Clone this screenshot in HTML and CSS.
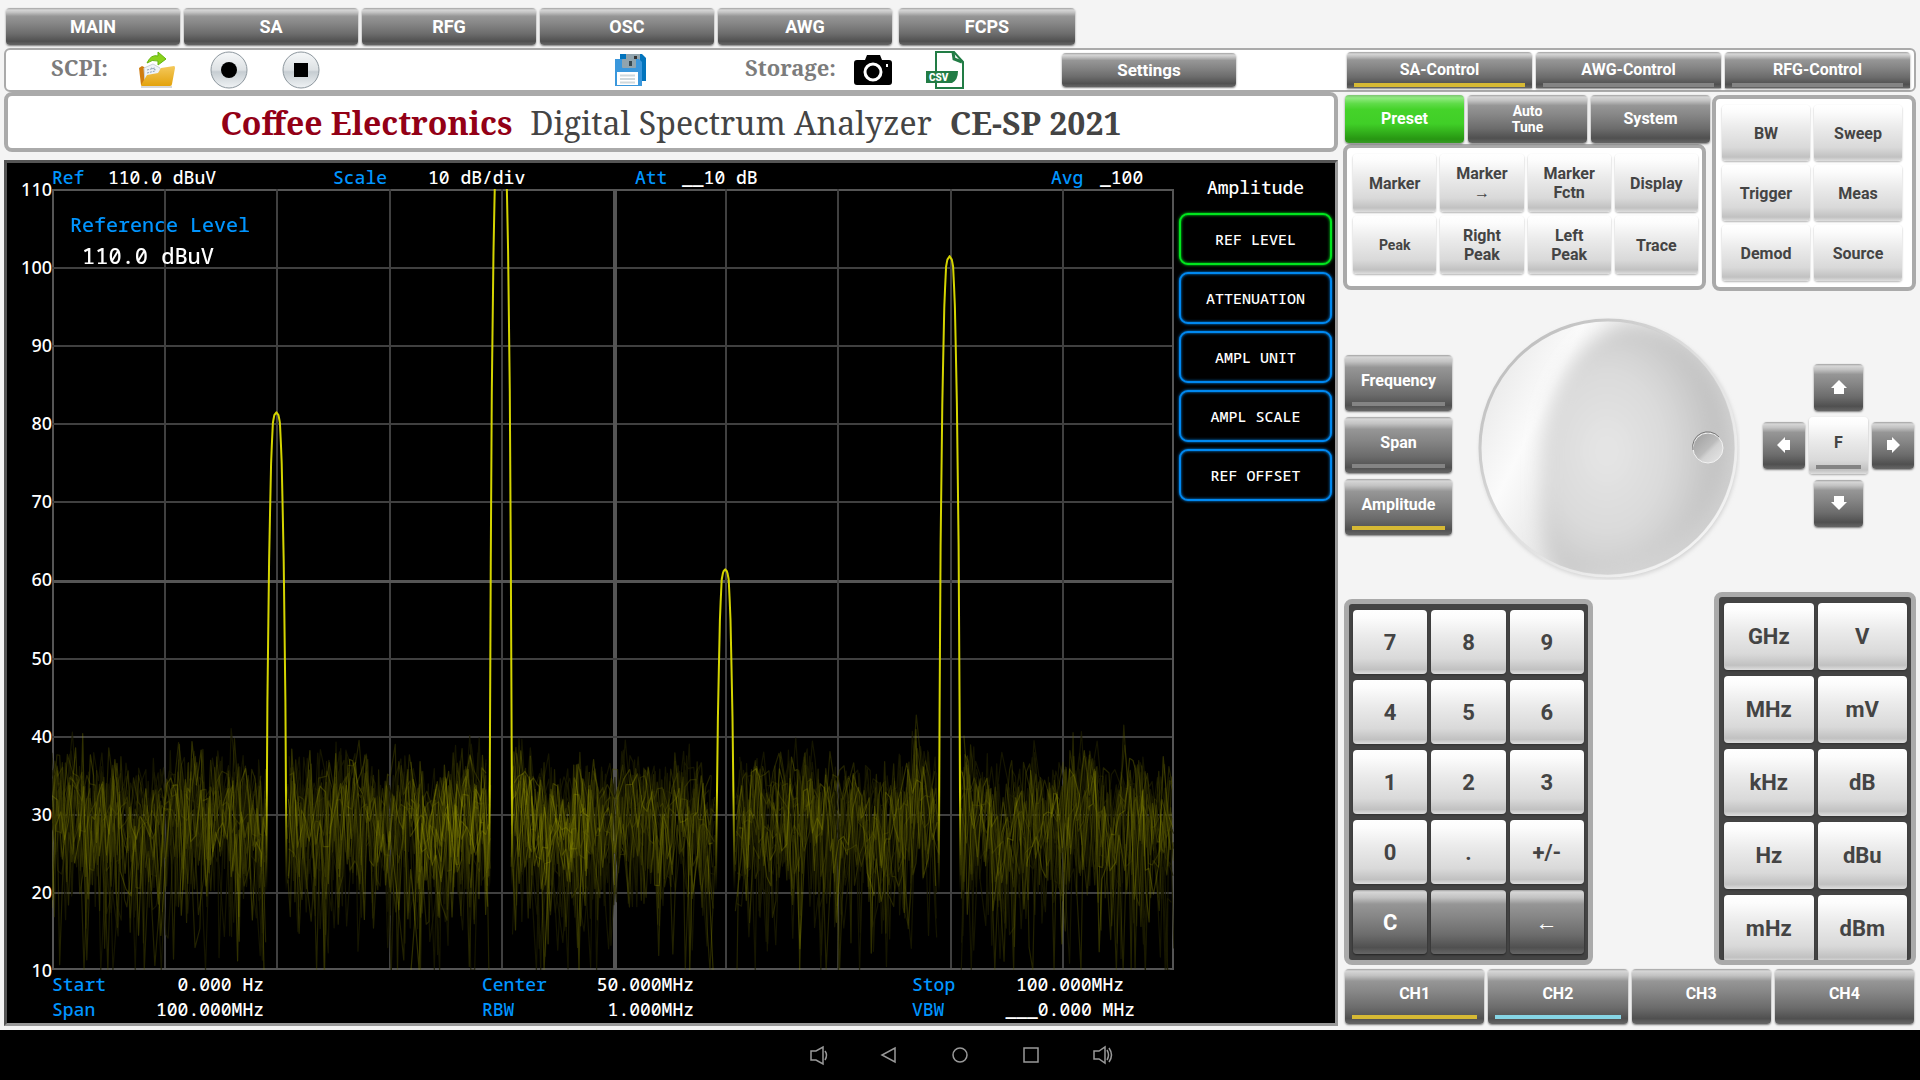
FILE: index.html
```
<!DOCTYPE html>
<html lang="en">
<head>
    <meta charset="UTF-8">
    <meta name="viewport" content="width=device-width, initial-scale=1.0">
    <title>Digital Spectrum Analyzer CE-SP 2021</title>
    <link rel="stylesheet" href="styles.css">
</head>
<body>
    <!-- Instrument mode buttons -->
    <nav class="modes">
        <button class="btn">MAIN</button>
        <button class="btn">SA</button>
        <button class="btn">RFG</button>
        <button class="btn">OSC</button>
        <button class="btn">AWG</button>
        <button class="btn">FCPS</button>
    </nav>

    <!-- Toolbar -->
    <header class="toolbar">
        <div class="tool-group">
            <span class="tool-label">SCPI:</span>
            <button class="icon-btn" aria-label="Open script">
                <svg width="38" height="38" viewBox="0 0 38 38">
                    <defs>
                        <linearGradient id="folder" x1="0" y1="0" x2="0" y2="1">
                            <stop offset="0" stop-color="#f4c95c"/>
                            <stop offset="1" stop-color="#e3a20c"/>
                        </linearGradient>
                    </defs>
                    <path d="M3 36h31" stroke="#d8d8d8" stroke-width="2"/>
                    <path d="M1 17l3-2 4 2v17H3z" fill="#d07c10"/>
                    <path d="M6 17l9-4 7 4 2 10-17 4z" fill="#eef2f6" stroke="#ccd3da" stroke-width="1"/>
                    <path d="M9 19l8-2M9 22l8-2M13 17l5 2" stroke="#8ea2b8" stroke-width="1" stroke-dasharray="2 1"/>
                    <path d="M9 24l11-2 3-5 13-2q1 0 1 2l-3 16q0 2-2 2H4q-1 0-1-1z" fill="url(#folder)"/>
                    <path d="M9 12Q13 3 20 5V1l8 7-8 6v-4q-6-2-11 2z" fill="#8bd21c" stroke="#63b40c" stroke-width="1"/>
                </svg>
            </button>
            <button class="icon-btn" aria-label="Record">
                <svg width="38" height="38" viewBox="0 0 38 38">
                    <defs>
                        <linearGradient id="disc" x1="0" y1="0" x2="0" y2="1">
                            <stop offset="0" stop-color="#f6f8f9"/>
                            <stop offset="0.5" stop-color="#dde1e4"/>
                            <stop offset="0.55" stop-color="#c6cdd2"/>
                            <stop offset="1" stop-color="#f0f3f5"/>
                        </linearGradient>
                    </defs>
                    <circle cx="19" cy="19" r="18" fill="url(#disc)" stroke="#8d979e" stroke-width="1"/>
                    <circle cx="19" cy="19" r="8" fill="#000"/>
                </svg>
            </button>
            <button class="icon-btn" aria-label="Stop">
                <svg width="38" height="38" viewBox="0 0 38 38">
                    <circle cx="19" cy="19" r="18" fill="url(#disc)" stroke="#8d979e" stroke-width="1"/>
                    <rect x="12" y="12" width="14" height="14" fill="#000"/>
                </svg>
            </button>
        </div>
        <div class="tool-group">
            <button class="icon-btn" aria-label="Save">
                <svg width="38" height="38" viewBox="0 0 38 38">
                    <path d="M9 3h22l4 4v23H9z" fill="#0274bd"/>
                    <path d="M15 3h14v6H15z" fill="#90a4ae"/>
                    <path d="M23 5h3v3h-3z" fill="#333"/>
                    <path d="M4 8h24l3 3v24H4z" fill="#3a97dc"/>
                    <rect x="11" y="8" width="14" height="9" rx="1" fill="#90a4ae"/>
                    <rect x="18" y="10" width="3" height="5" fill="#37474f"/>
                    <rect x="6" y="21" width="21" height="13" fill="#fff"/>
                    <path d="M9 24.500h15M9 28h15M9 31.500h15" stroke="#cfd8dc" stroke-width="2"/>
                </svg>
            </button>
        </div>
        <div class="tool-group storage">
            <span class="tool-label">Storage:</span>
            <button class="icon-btn" aria-label="Screenshot">
                <svg width="38" height="38" viewBox="0 0 38 38">
                    <path d="M3 9h8l2-5h13l2 5h7q3 0 3 3v19q0 3-3 3H3q-3 0-3-3V12q0-3 3-3z" fill="#000"/>
                    <circle cx="19" cy="21" r="8" fill="none" stroke="#fff" stroke-width="3"/>
                    <rect x="32" y="13" width="2" height="3" fill="#fff"/>
                </svg>
            </button>
            <button class="icon-btn" aria-label="Export CSV">
                <svg width="38" height="38" viewBox="0 0 38 38">
                    <path d="M10 1h18l9 10v26H10z" fill="#fff" stroke="#227c45" stroke-width="2"/>
                    <path d="M27 1l1 7 8 3" fill="none" stroke="#227c45" stroke-width="3"/>
                    <path d="M0 20h32q0 9-6 12H0z" fill="#227c45"/>
                    <text x="3" y="30" class="csv-text">CSV</text>
                </svg>
            </button>
        </div>
        <button class="btn settings">Settings</button>
        <div class="tabs">
            <button class="btn led yellow">SA-Control</button>
            <button class="btn led">AWG-Control</button>
            <button class="btn led">RFG-Control</button>
        </div>
    </header>

    <main class="workspace">
        <section class="instrument">
            <h1 class="title">
                <b class="brand">Coffee Electronics</b>
                <span>Digital Spectrum Analyzer</span>
                <b>CE-SP 2021</b>
            </h1>

            <div class="screen">
                <div class="graph">
                    <dl class="readout-top">
                        <dt>Ref</dt><dd>110.0 dBuV</dd>
                        <dt>Scale</dt><dd>10 dB/div</dd>
                        <dt>Att</dt><dd>__10 dB</dd>
                        <dt>Avg</dt><dd>_100</dd>
                    </dl>
                    <div class="axis">
                        <span>110</span><span>100</span><span>90</span><span>80</span><span>70</span><span>60</span><span>50</span><span>40</span><span>30</span><span>20</span><span>10</span>
                    </div>
                    <div class="plot">
                        <canvas id="trace"></canvas>
                        <div class="ref-level">
                            <span>Reference Level</span>
                            <strong>110.0 dBuV</strong>
                        </div>
                    </div>
                    <dl class="readout-bottom">
                        <div><dt>Start</dt><dd>0.000 Hz</dd></div>
                        <div><dt>Center</dt><dd>50.000MHz</dd></div>
                        <div><dt>Stop</dt><dd>100.000MHz</dd></div>
                        <div><dt>Span</dt><dd>100.000MHz</dd></div>
                        <div><dt>RBW</dt><dd>1.000MHz</dd></div>
                        <div class="wide"><dt>VBW</dt><dd>___0.000 MHz</dd></div>
                    </dl>
                </div>
                <div class="soft-menu">
                    <h2>Amplitude</h2>
                    <button class="soft active">REF LEVEL</button>
                    <button class="soft">ATTENUATION</button>
                    <button class="soft">AMPL UNIT</button>
                    <button class="soft">AMPL SCALE</button>
                    <button class="soft">REF OFFSET</button>
                </div>
            </div>
        </section>

        <aside class="controls">
            <div class="functions">
                <div class="functions-left">
                    <div class="preset-row">
                        <button class="btn green">Preset</button>
                        <button class="btn small">Auto<br>Tune</button>
                        <button class="btn">System</button>
                    </div>
                    <div class="box marker-box">
                        <button class="btn light">Marker</button>
                        <button class="btn light">Marker<br>→</button>
                        <button class="btn light">Marker<br>Fctn</button>
                        <button class="btn light">Display</button>
                        <button class="btn light small">Peak</button>
                        <button class="btn light">Right<br>Peak</button>
                        <button class="btn light">Left<br>Peak</button>
                        <button class="btn light">Trace</button>
                    </div>
                </div>
                <div class="box measure-box">
                    <button class="btn light">BW</button>
                    <button class="btn light">Sweep</button>
                    <button class="btn light">Trigger</button>
                    <button class="btn light">Meas</button>
                    <button class="btn light">Demod</button>
                    <button class="btn light">Source</button>
                </div>
            </div>

            <div class="tuning">
                <div class="tuning-keys">
                    <button class="btn led">Frequency</button>
                    <button class="btn led">Span</button>
                    <button class="btn led yellow">Amplitude</button>
                </div>
                <svg class="knob" width="264" height="264" viewBox="0 0 264 264">
                    <defs>
                        <linearGradient id="rim" x1="0" y1="0" x2="1" y2="1">
                            <stop offset="0" stop-color="#b4b4b4"/>
                            <stop offset="0.5" stop-color="#e0e0e0"/>
                            <stop offset="1" stop-color="#fafafa"/>
                        </linearGradient>
                        <linearGradient id="face" x1="0" y1="0.200" x2="1" y2="0.700">
                            <stop offset="0" stop-color="#e6e6e6"/>
                            <stop offset="0.250" stop-color="#fbfbfb"/>
                            <stop offset="0.600" stop-color="#dadada"/>
                            <stop offset="1" stop-color="#d0d0d0"/>
                        </linearGradient>
                        <radialGradient id="dish" cx="0.350" cy="0.500" r="0.660">
                            <stop offset="0" stop-color="#e6e6e6"/>
                            <stop offset="0.500" stop-color="#dadada"/>
                            <stop offset="1" stop-color="#bcbcbc"/>
                        </radialGradient>
                        <linearGradient id="dot" x1="0" y1="0" x2="1" y2="1">
                            <stop offset="0" stop-color="#9c9c9c"/>
                            <stop offset="0.500" stop-color="#bcbcbc"/>
                            <stop offset="0.600" stop-color="#d2d2d2"/>
                            <stop offset="1" stop-color="#e8e8e8"/>
                        </linearGradient>
                        <filter id="soft" x="-20%" y="-20%" width="140%" height="140%"><feGaussianBlur stdDeviation="9"/></filter>
                        <filter id="halo" x="-10%" y="-10%" width="120%" height="120%"><feGaussianBlur stdDeviation="2"/></filter>
                        <clipPath id="disk"><circle cx="132" cy="132" r="127"/></clipPath>
                    </defs>
                    <circle cx="133" cy="134" r="129" fill="#d0d0d0" filter="url(#halo)"/>
                    <circle cx="132" cy="132" r="128" fill="url(#face)" stroke="url(#rim)" stroke-width="3"/>
                    <g clip-path="url(#disk)">
                        <path d="M150 8C210 10 252 60 252 125C252 205 190 258 95 262C60 250 66 190 66 140C68 80 100 20 150 8Z" fill="url(#dish)" filter="url(#soft)"/>
                    </g>
                    <circle cx="232" cy="132" r="15" fill="url(#dot)" stroke="#f2f2f2" stroke-width="1"/>
                    <path d="M217 134a15 15 0 0 1 26-13" fill="none" stroke="#777" stroke-width="1"/>
                </svg>
                <div class="dpad">
                    <button class="btn up" aria-label="Up"><svg width="16" height="16" viewBox="0 0 16 16"><path d="M8 1l8 8h-3v6H3V9H0z" fill="#fff"/></svg></button>
                    <button class="btn left" aria-label="Left"><svg width="16" height="16" viewBox="0 0 16 16"><path d="M1 8l8-8v3h5v10H9v3z" fill="#fff"/></svg></button>
                    <button class="btn light led center">F</button>
                    <button class="btn right" aria-label="Right"><svg width="16" height="16" viewBox="0 0 16 16"><path d="M15 8L7 0v3H2v10h5v3z" fill="#fff"/></svg></button>
                    <button class="btn down" aria-label="Down"><svg width="16" height="16" viewBox="0 0 16 16"><path d="M8 15L0 7h3V1h10v6h3z" fill="#fff"/></svg></button>
                </div>
            </div>

            <div class="entry">
                <div class="pad keypad">
                    <button class="btn light">7</button>
                    <button class="btn light">8</button>
                    <button class="btn light">9</button>
                    <button class="btn light">4</button>
                    <button class="btn light">5</button>
                    <button class="btn light">6</button>
                    <button class="btn light">1</button>
                    <button class="btn light">2</button>
                    <button class="btn light">3</button>
                    <button class="btn light">0</button>
                    <button class="btn light">.</button>
                    <button class="btn light">+/-</button>
                    <button class="btn">C</button>
                    <button class="btn" aria-label="Blank"></button>
                    <button class="btn">←</button>
                </div>
                <div class="pad units">
                    <button class="btn light">GHz</button>
                    <button class="btn light">V</button>
                    <button class="btn light">MHz</button>
                    <button class="btn light">mV</button>
                    <button class="btn light">kHz</button>
                    <button class="btn light">dB</button>
                    <button class="btn light">Hz</button>
                    <button class="btn light">dBu</button>
                    <button class="btn light">mHz</button>
                    <button class="btn light">dBm</button>
                </div>
            </div>

            <div class="channels">
                <button class="btn led yellow">CH1</button>
                <button class="btn led cyan">CH2</button>
                <button class="btn">CH3</button>
                <button class="btn">CH4</button>
            </div>
        </aside>
    </main>

    <!-- System navigation bar -->
    <footer class="system-bar">
        <button aria-label="Volume down"><svg width="22" height="22" viewBox="0 0 22 22"><path d="M4 7h5l7-4v17l-7-4H4zM18 7q3 4 0 9"/></svg></button>
        <button aria-label="Back"><svg width="22" height="22" viewBox="0 0 22 22"><path d="M17 4v14L4 11z"/></svg></button>
        <button aria-label="Home"><svg width="22" height="22" viewBox="0 0 22 22"><circle cx="11" cy="11" r="7"/></svg></button>
        <button aria-label="Recent"><svg width="22" height="22" viewBox="0 0 22 22"><path d="M4 4h14v14H4z"/></svg></button>
        <button aria-label="Volume up"><svg width="22" height="22" viewBox="0 0 22 22"><path d="M3 7h5l6-4v16l-6-4H3zM16 6q3 5 0 10M18 4q5 7 0 14"/></svg></button>
    </footer>

    <script src="script.js"></script>
</body>
</html>
```
FILE: styles.css
```
* {
    box-sizing: border-box;
}
body {
    margin: 0;
    min-height: 100vh;
    display: flex;
    flex-direction: column;
    background-color: #f4f4f4;
    font-family: Roboto, "Liberation Sans", sans-serif;
}
button {
    font-family: inherit;
    border: 0;
    padding: 0;
    cursor: pointer;
}
dl, dd, h1, h2 {
    margin: 0;
}

/* Buttons */
.btn {
    position: relative;
    border-radius: 4px;
    background: linear-gradient(#a2a2a2, #d6d6d6 2px, #c2c2c2 12%, #969696 22%, #868686 42%, #6c6c6c 70%, #505050 90%, #666);
    box-shadow: 0 1px 2px rgba(0, 0, 0, 0.5);
    color: #fff;
    font-size: 16px;
    font-weight: 700;
    line-height: 19px;
}
.btn.green {
    background: linear-gradient(#7cc470, #90ea80 3px, #5fdc48 18%, #45d32a 30%, #40cf27 60%, #279612 92%, #3a9a28);
}
.btn.light {
    background: linear-gradient(#fff, #fcfcfc 12%, #ebebeb 40%, #d9d9d9 76%, #c1c1c1 93%, #dedede);
    box-shadow: 0 1px 2px rgba(0, 0, 0, 0.3);
    color: #444;
}
.btn.small {
    font-size: 14px;
}
.btn.led::after {
    content: "";
    position: absolute;
    left: 7px;
    right: 7px;
    bottom: 5px;
    height: 4px;
    background-color: #848484;
}
.btn.yellow::after {
    background-color: #d6b934;
}
.btn.cyan::after {
    background-color: #86d5e5;
}

.modes {
    display: flex;
    gap: 4px;
    padding: 8px 6px 1px;
}
.modes .btn {
    width: 174px;
    height: 37px;
    font-size: 18px;
}
.modes .btn:last-child {
    width: 176px;
    margin-left: 3px;
}

/* Toolbar */
.toolbar {
    display: grid;
    grid-template-columns: 560px 134px 317px 1fr auto;
    align-items: center;
    height: 44px;
    margin: 2px 4px 0;
    padding: 0 4px 0 45px;
    border: 2px solid #aaa;
    border-radius: 6px;
    background-color: #fff;
}
.tool-group {
    display: flex;
    align-items: center;
    gap: 34px;
}
.tool-label {
    font-family: "Noto Serif", "Liberation Serif", serif;
    font-size: 22px;
    font-weight: 700;
    line-height: 24px;
    color: #7c7c7c;
    margin-right: -4px;
    padding-bottom: 7px;
}
.storage .tool-label {
    margin-right: -16px;
}
.icon-btn {
    display: flex;
    background: none;
}
.csv-text {
    font-family: Roboto, sans-serif;
    font-size: 10px;
    font-weight: 900;
    fill: #fff;
}
.settings {
    width: 174px;
    height: 34px;
    font-size: 17px;
}
.tabs {
    display: flex;
    gap: 4px;
}
.tabs .btn {
    width: 185px;
    height: 36px;
    padding-bottom: 2px;
    border-radius: 4px 4px 0 0;
}
.tabs .btn::after {
    bottom: 1px;
}

.workspace {
    flex: 1;
    display: grid;
    grid-template-columns: minmax(0, 1fr) 573px;
    gap: 5px;
    padding: 0 4px 4px;
}

/* Analyzer screen */
.instrument {
    display: flex;
    flex-direction: column;
    gap: 8px;
}
.title {
    display: flex;
    justify-content: center;
    gap: 18px;
    padding: 7px 0 5px;
    border: 4px solid #aaa;
    border-radius: 8px;
    background-color: #fff;
    font-family: "Noto Serif", "Liberation Serif", serif;
    font-size: 32px;
    font-weight: 400;
    line-height: 40px;
    color: #444;
}
.title .brand {
    color: #930016;
}
.screen {
    flex: 1;
    display: flex;
    gap: 5px;
    padding-right: 3px;
    border: 3px solid;
    border-color: #555 #999 #999 #555;
    background-color: #000;
    color: #fff;
    font-family: "Droid Sans Mono", "Noto Sans Mono", "DejaVu Sans Mono", monospace;
    font-size: 18px;
    font-weight: 500;
}
.graph {
    flex: 1;
    display: grid;
    grid-template-columns: 45px 1fr;
    grid-template-rows: auto 1fr auto;
}
.graph dt {
    color: #0095ff;
}
.readout-top {
    grid-column: 2;
    display: grid;
    grid-template-columns: 56px 225px 95px 207px 47px 1fr 49px 74px;
    height: 26px;
    line-height: 28px;
}
.axis {
    display: flex;
    flex-direction: column;
    justify-content: space-between;
    text-align: right;
    font-family: "Noto Sans", "Open Sans", sans-serif;
}
.axis span {
    height: 0;
    line-height: 0;
}
.plot {
    position: relative;
}
.plot canvas {
    position: absolute;
    width: 100%;
    height: 100%;
}
.ref-level {
    position: absolute;
    top: 21px;
    left: 18px;
    display: flex;
    flex-direction: column;
    font-size: 20px;
    line-height: 30px;
}
.ref-level span {
    color: #0095ff;
}
.ref-level strong {
    padding-left: 12px;
    font-size: 22px;
    font-weight: 500;
}
.readout-bottom {
    grid-column: 2;
    display: grid;
    grid-template-columns: 430px 430px 1fr;
    padding: 2px 0 1px;
    line-height: 25px;
}
.readout-bottom div {
    display: flex;
    justify-content: space-between;
    width: 212px;
}
.readout-bottom .wide {
    width: 223px;
}
.soft-menu {
    display: flex;
    flex-direction: column;
    gap: 7px;
    width: 153px;
    padding-top: 10px;
}
.soft-menu h2 {
    font-size: 18px;
    font-weight: 500;
    line-height: 28px;
    text-align: center;
    margin-bottom: 5px;
}
.soft {
    height: 52px;
    border: 2px solid #0088f0;
    border-radius: 9px;
    background-color: #000;
    box-shadow: 0 0 3px #0088f0, inset 0 0 3px #0088f0;
    color: #fff;
    font-size: 15px;
    font-weight: 500;
}
.soft.active {
    border-color: #00e61e;
    box-shadow: 0 0 3px #00e61e, inset 0 0 3px #00e61e;
}

/* Front panel */
.controls {
    display: flex;
    flex-direction: column;
    padding-bottom: 2px;
}
.functions {
    display: flex;
    justify-content: space-between;
    padding-top: 3px;
}
.box {
    display: grid;
    border: 4px solid #aaa;
    border-radius: 8px;
    background-color: #fff;
}
.functions-left {
    display: flex;
    flex-direction: column;
    gap: 1px;
    width: 367px;
}
.preset-row {
    display: grid;
    grid-template-columns: repeat(3, 1fr);
    gap: 4px;
    padding-left: 2px;
}
.preset-row .btn {
    height: 48px;
    line-height: 16px;
}
.marker-box {
    width: 363px;
    grid-template-columns: repeat(4, 1fr);
    gap: 4px;
    padding: 6px 4px 12px 6px;
}
.marker-box .btn {
    height: 58px;
}
.measure-box {
    width: 204px;
    grid-template-columns: repeat(2, 1fr);
    gap: 4px;
    padding: 6px 10px 6px 6px;
}
.measure-box .btn {
    height: 56px;
}
.tuning {
    flex: 1;
    display: flex;
    align-items: center;
    justify-content: space-between;
    padding: 13px 2px 0;
}
.tuning-keys {
    display: grid;
    gap: 6px;
    width: 107px;
    margin-bottom: 6px;
}
.tuning-keys .btn {
    height: 56px;
    padding-bottom: 6px;
}
.dpad {
    display: grid;
    grid-template: "a up b" 47px "left center right" 57px "c down d" 47px / 42px 59px 42px;
    gap: 6px 4px;
    align-items: center;
    justify-items: center;
    margin-bottom: 6px;
}
.dpad .btn {
    width: 49px;
    height: 47px;
}
.dpad .btn svg {
    display: block;
    margin: auto;
}
.dpad .up {
    grid-area: up;
}
.dpad .left {
    grid-area: left;
    width: 42px;
}
.dpad .right {
    grid-area: right;
    width: 42px;
}
.dpad .down {
    grid-area: down;
}
.dpad .center {
    grid-area: center;
    width: 59px;
    height: 57px;
    padding-bottom: 6px;
}
.entry {
    display: flex;
    justify-content: space-between;
    align-items: flex-end;
    padding-left: 1px;
}
.pad {
    display: grid;
    gap: 6px 4px;
    border: 5px solid #aaa;
    border-radius: 8px;
    background-color: #444;
}
.pad .btn {
    font-size: 22px;
}
.keypad {
    width: 249px;
    grid-template-columns: repeat(3, 1fr);
    padding: 6px 4px;
}
.keypad .btn {
    height: 64px;
}
.units {
    width: 202px;
    height: 373px;
    grid-template: repeat(5, 67px) / repeat(2, 1fr);
    padding: 6px 4px 2px 5px;
    overflow: hidden;
}
.channels {
    display: grid;
    grid-template-columns: repeat(4, 1fr);
    gap: 4px;
    padding: 4px 2px 0;
}
.channels .btn {
    height: 55px;
    padding-bottom: 7px;
}

.system-bar {
    display: flex;
    justify-content: center;
    align-items: center;
    gap: 49px;
    height: 50px;
    background-color: #000;
}
.system-bar button {
    display: flex;
    background: none;
}
.system-bar svg {
    fill: none;
    stroke: #999;
    stroke-width: 1.5;
}
```
FILE: script.js
```
const canvas = document.getElementById('trace');
const ctx = canvas.getContext('2d');

// carrier positions in divisions, levels in dBuV
const peaks = [
    { x: 2, level: 81.4 },
    { x: 4, level: 121 },
    { x: 6, level: 61.3 },
    { x: 8, level: 101.4 }
];

// [drop in dB, half width in px] of the RBW filter shape
const skirt = [
    [0, 0], [0.3, 2], [1.3, 3.5], [4, 4.5], [6.5, 5.3], [12.5, 6.3],
    [19, 7.3], [37, 9], [58, 10], [100, 11.5]
];

let seed = 2021;
function random() {
    seed = (seed * 1664525 + 1013904223) % 4294967296;
    return (seed + 1) / 4294967297;
}

function halfWidth(drop) {
    for (let i = 1; i < skirt.length; i++) {
        if (drop <= skirt[i][0]) {
            const [d0, w0] = skirt[i - 1];
            const [d1, w1] = skirt[i];
            return w0 + (w1 - w0) * (drop - d0) / (d1 - d0);
        }
    }
    return 12;
}

function drawGrid(w, h) {
    for (let i = 0; i <= 10; i++) {
        ctx.fillStyle = i === 0 || i === 5 || i === 10 ? '#555' : '#404040';
        const x = Math.min(w - 2, Math.round(i * w / 10));
        const y = Math.min(h - 2, Math.round(i * h / 10));
        ctx.fillRect(x, 0, i === 5 ? 4 : 2, h);
        ctx.fillRect(0, y, w, i === 5 ? 3 : 2);
    }
}

function drawNoise(w, h, count, color, from, to) {
    ctx.strokeStyle = color;
    for (let n = 0; n < count; n++) {
        ctx.beginPath();
        let gap = true;
        for (let x = from; x < to; x += 2 + random() * 4) {
            const inPeak = peaks.some(p => Math.abs(x - p.x * w / 10) < 10);
            // slow drift of the floor, shared by all sweeps
            const drift = Math.sin(x / 9) + Math.sin(x / 23 + 1);
            const level = 31 + drift + 10 * Math.log10(-Math.log(random()));
            const y = Math.min(h, (110 - level) * h / 100);
            if (inPeak) {
                gap = true;
            } else if (gap) {
                ctx.moveTo(x, y);
                gap = false;
            } else {
                ctx.lineTo(x, y);
            }
        }
        ctx.stroke();
    }
}

function drawPeaks(w, h) {
    const fade = ctx.createLinearGradient(0, 0, 0, h);
    fade.addColorStop(0, '#d4d400');
    fade.addColorStop(0.77, '#d4d400');
    fade.addColorStop(0.9, 'rgba(160, 160, 0, 0)');
    ctx.strokeStyle = fade;
    ctx.lineWidth = 2;
    peaks.forEach(p => {
        const cx = p.x * w / 10;
        ctx.beginPath();
        for (let side = -1; side <= 1; side += 2) {
            for (let i = 0; i <= 200; i++) {
                const drop = side < 0 ? 200 - i : i;
                const dB = drop * (p.level - 12) / 200;
                const y = (110 - p.level + dB) * h / 100;
                ctx.lineTo(cx + side * halfWidth(dB), y);
            }
        }
        ctx.stroke();
    });
}

function draw() {
    const w = canvas.width = canvas.clientWidth;
    const h = canvas.height = canvas.clientHeight;
    seed = 2021;
    drawGrid(w, h);
    ctx.lineWidth = 1.2;
    ctx.lineJoin = 'round';
    drawNoise(w, h, 12, 'rgba(28, 28, 0, 0.75)', 0, w);
    drawNoise(w, h, 7, 'rgba(84, 84, 0, 0.4)', 0, w);
    drawNoise(w, h, 2, 'rgba(150, 150, 0, 0.32)', 0, w);
    drawNoise(w, h, 4, 'rgba(170, 170, 0, 0.28)', w * 0.32, w * 0.48);
    drawPeaks(w, h);
}

window.addEventListener('resize', draw);
draw();
```
